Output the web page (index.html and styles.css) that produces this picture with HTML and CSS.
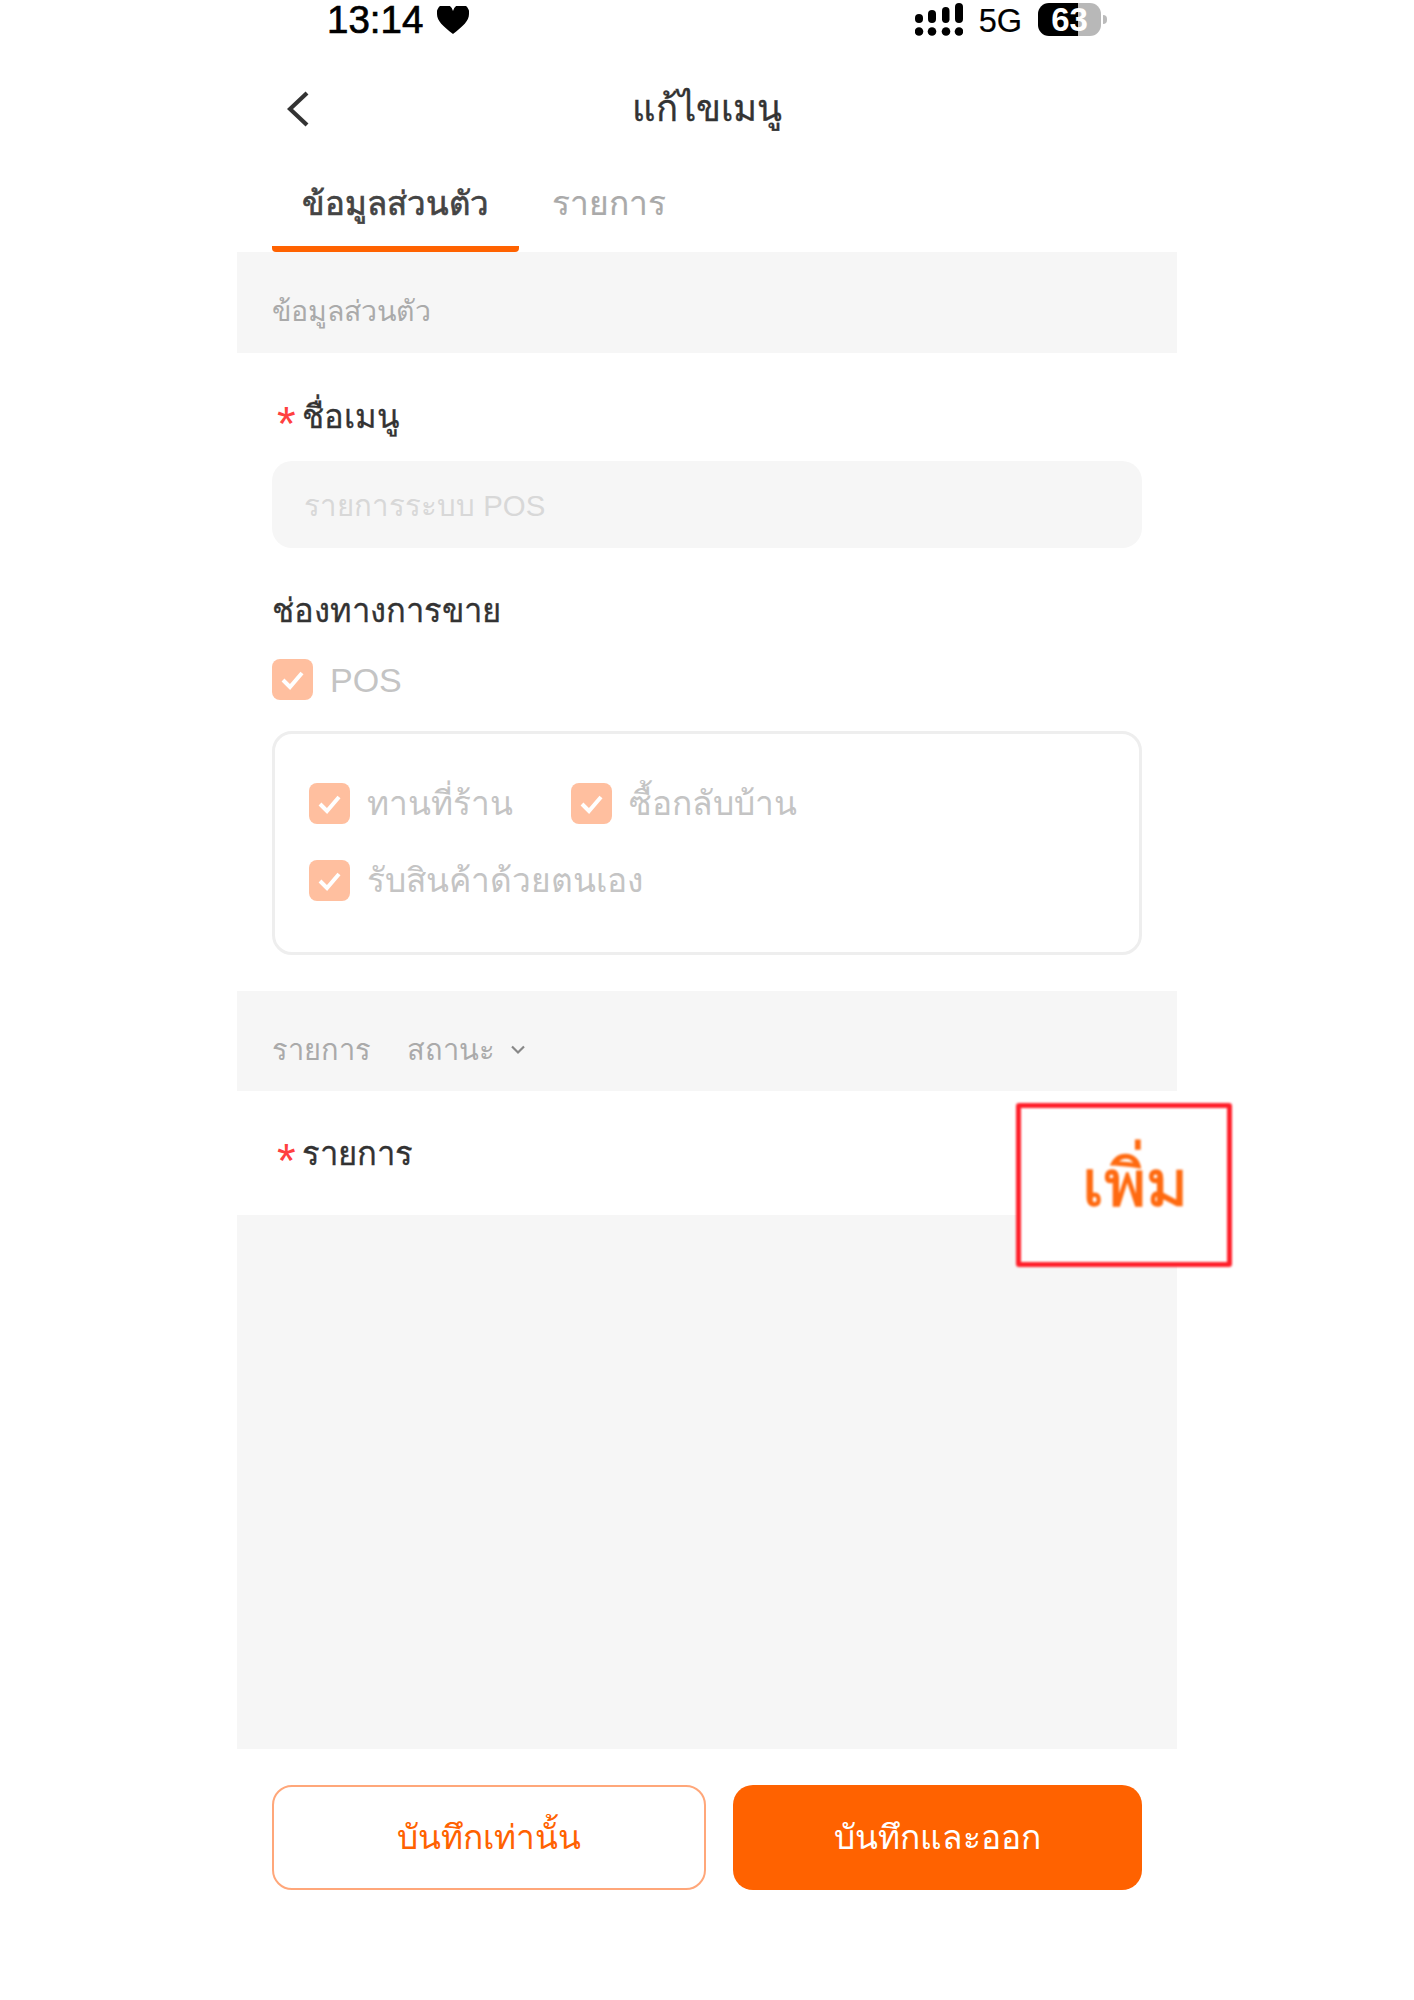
FILE: index.html
```html
<!DOCTYPE html>
<html lang="th">
<head>
<meta charset="utf-8">
<title>แก้ไขเมนู</title>
<link rel="stylesheet" href="styles.css">
</head>
<body>
<main class="phone">
  <div class="status">
    <div class="status-left">
      <span class="time">13:14</span>
      <svg class="heart" viewBox="0 0 32 28"><path d="M16 28C6 20 0 15 0 8a8 8 0 0 1 16-3 8 8 0 0 1 16 3c0 7-6 12-16 20z"/></svg>
    </div>
    <div class="status-right">
      <svg class="signal" viewBox="0 0 48 33"><g><rect x="0" y="11" width="8" height="9" rx="4"/><rect x="13" y="7" width="8" height="13" rx="4"/><rect x="27" y="4" width="7.500" height="16" rx="3.700"/><rect x="40" y="0" width="8" height="20" rx="4"/><circle cx="4" cy="28.500" r="4.300"/><circle cx="17" cy="28.500" r="4.300"/><circle cx="31" cy="28.500" r="4.300"/><circle cx="44" cy="28.500" r="4.300"/></g></svg>
      <span class="net">5G</span>
      <div class="battery"><span>63</span></div>
      <i class="nub"></i>
    </div>
  </div>
  <header class="nav">
    <svg class="back" viewBox="0 0 22 36"><path d="M20 2 3 18l17 16" fill="none" stroke="#333" stroke-width="4.200"/></svg>
    <h1>แก้ไขเมนู</h1>
  </header>
  <nav class="tabs">
    <a class="tab active">ข้อมูลส่วนตัว</a>
    <a class="tab">รายการ</a>
  </nav>
  <div class="band">ข้อมูลส่วนตัว</div>
  <section class="form">
    <div class="label"><b class="star">*</b>ชื่อเมนู</div>
    <div class="input">รายการระบบ POS</div>
    <div class="label channel">ช่องทางการขาย</div>
    <label class="check pos">
      <svg class="cb" viewBox="0 0 41 41"><rect width="41" height="41" rx="8" fill="#ffbf9f"/><path d="m11 21 7 7 12-14" fill="none" stroke="#fff" stroke-width="4"/></svg>
      POS
    </label>
    <div class="box">
      <div class="box-row">
        <label class="check first">
          <svg class="cb" viewBox="0 0 41 41"><rect width="41" height="41" rx="8" fill="#ffbf9f"/><path d="m11 21 7 7 12-14" fill="none" stroke="#fff" stroke-width="4"/></svg>
          ทานที่ร้าน
        </label>
        <label class="check">
          <svg class="cb" viewBox="0 0 41 41"><rect width="41" height="41" rx="8" fill="#ffbf9f"/><path d="m11 21 7 7 12-14" fill="none" stroke="#fff" stroke-width="4"/></svg>
          ซื้อกลับบ้าน
        </label>
      </div>
      <div class="box-row">
        <label class="check">
          <svg class="cb" viewBox="0 0 41 41"><rect width="41" height="41" rx="8" fill="#ffbf9f"/><path d="m11 21 7 7 12-14" fill="none" stroke="#fff" stroke-width="4"/></svg>
          รับสินค้าด้วยตนเอง
        </label>
      </div>
    </div>
  </section>
  <div class="band band-list">
    <span class="band-first">รายการ</span>
    <span>สถานะ</span>
    <svg class="caret" viewBox="0 0 16 10"><path d="m2 1.500 6 6 6-6" fill="none" stroke="#888" stroke-width="2.200"/></svg>
  </div>
  <div class="list-head">
    <div class="label"><b class="star">*</b>รายการ</div>
    <div class="annot">เพิ่ม</div>
  </div>
  <div class="empty"></div>
  <footer class="actions">
    <button class="btn ghost">บันทึกเท่านั้น</button>
    <button class="btn solid">บันทึกและออก</button>
  </footer>
</main>
</body>
</html>
```
FILE: styles.css
```css
* { box-sizing: border-box; }
body { margin: 0; background: #fff; font-family: "Liberation Sans", "Noto Sans", sans-serif; color: #333; }
.phone { width: 940px; margin-left: 237px; display: flex; flex-direction: column; height: 2000px; }

.status { height: 40px; display: flex; justify-content: space-between; padding: 3px 70px 0 90px; color: #000; }
.status-left { display: flex; align-items: center; height: 34px; }
.time { font-size: 38.500px; line-height: 36px; -webkit-text-stroke: .7px #000; }
.heart { width: 32px; height: 28px; margin-left: 14px; }
.status-right { display: flex; align-items: flex-start; height: 33px; }
.signal { width: 48px; height: 33px; }
.net { font-size: 32.500px; line-height: 36px; margin-left: 16px; margin-right: 1px; -webkit-text-stroke: .2px #000; }
.battery { width: 63px; height: 33px; margin-left: 15px; border-radius: 11px; background: linear-gradient(90deg, #000 0 40px, #b8b8b8 40px); color: #fff; font-size: 33px; font-weight: bold; line-height: 33px; text-align: center; }
.nub { width: 4px; height: 9px; margin: 12px 0 0 2px; background: #bbb; border-radius: 0 4px 4px 0; }

.nav { height: 136px; display: flex; align-items: center; justify-content: center; position: relative; }
.nav h1 { margin: 0; font-size: 36.500px; font-weight: normal; color: #333; -webkit-text-stroke: .3px #333; }
.back { position: absolute; left: 50px; top: 51px; width: 22px; height: 36px; }

.tabs { height: 76px; display: flex; padding-left: 35px; }
.tab { width: 247px; height: 76px; padding-top: 7px; font-size: 33px; line-height: 42px; text-align: center; color: #444; -webkit-text-stroke: .7px #444; border-bottom: 6px solid #ff6200; border-radius: 0 0 4px 4px; }
.tab + .tab { width: auto; margin-left: 33px; font-size: 33.500px; color: #aaa; -webkit-text-stroke: .2px #aaa; border: 0; }

.band { height: 101px; background: #f6f6f6; padding: 39px 35px 0; font-size: 28.500px; line-height: 40px; color: #aaa; }
.form { padding: 43px 35px 36px; }
.label { font-size: 32.800px; line-height: 42px; color: #333; display: flex; align-items: center; height: 42px; -webkit-text-stroke: .3px #333; }
.star { width: 30px; padding-left: 5px; color: #ff4040; font-weight: normal; font-size: 48px; line-height: 50px; height: 36px; -webkit-text-stroke: 0; }
.input { height: 87px; margin-top: 23px; padding: 25px 32px 0; background: #f6f6f6; border-radius: 20px; font-size: 29.400px; line-height: 40px; color: #d8d8d8; }
.channel { margin-top: 42px; }
.check { display: flex; align-items: center; font-size: 33.500px; line-height: 44px; color: #c4c4c4; height: 41px; }
.cb { width: 41px; height: 41px; margin-right: 17px; flex: none; }
.pos { margin-top: 27px; font-size: 34px; }
.box { margin-top: 31px; height: 224px; border: 3px solid #eeeeee; border-radius: 20px; padding: 49px 34px 0; }
.box-row { display: flex; height: 41px; margin-bottom: 36px; }
.first { width: 262px; }

.band-list { display: flex; align-items: center; padding: 17px 35px 0; height: 100px; font-size: 29px; }
.band-first { margin-right: 36px; }
.caret { width: 16px; height: 10px; margin-left: 15px; }

.list-head { height: 124px; padding: 42px 35px 0; position: relative; }
.annot { position: absolute; left: 779px; top: 12px; width: 216px; height: 164px; border: 5px solid #ff1f2a; border-radius: 3px; background: #fff; padding: 36px 0 0 61px; color: #ff6a10; font-size: 64px; line-height: 80px; -webkit-text-stroke: 1.300px #ff6a10; filter: blur(1.200px); }
.empty { height: 534px; background: #f6f6f6; }

.actions { display: flex; gap: 27px; padding: 36px 35px 0; }
.btn { height: 105px; border-radius: 20px; font: 33.500px "Liberation Sans", "Noto Sans", sans-serif; }
.ghost { width: 434px; background: #fff; border: 2.500px solid #ffa77a; color: #ff6200; }
.solid { width: 409px; background: #ff6200; border: 0; color: #fff; }
```
